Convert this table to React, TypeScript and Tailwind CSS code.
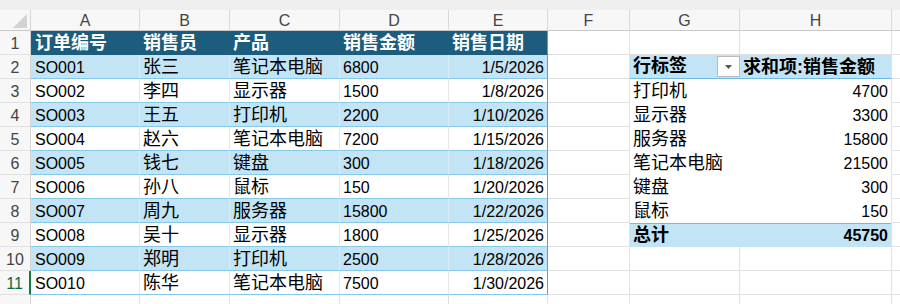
import React from "react";

const orders = [
  ["SO001", "张三", "笔记本电脑", "6800", "1/5/2026"],
  ["SO002", "李四", "显示器", "1500", "1/8/2026"],
  ["SO003", "王五", "打印机", "2200", "1/10/2026"],
  ["SO004", "赵六", "笔记本电脑", "7200", "1/15/2026"],
  ["SO005", "钱七", "键盘", "300", "1/18/2026"],
  ["SO006", "孙八", "鼠标", "150", "1/20/2026"],
  ["SO007", "周九", "服务器", "15800", "1/22/2026"],
  ["SO008", "吴十", "显示器", "1800", "1/25/2026"],
  ["SO009", "郑明", "打印机", "2500", "1/28/2026"],
  ["SO010", "陈华", "笔记本电脑", "7500", "1/30/2026"],
];

// pivot rows, keyed by sheet row number
const pivot: Record<number, [string, string]> = {
  3: ["打印机", "4700"],
  4: ["显示器", "3300"],
  5: ["服务器", "15800"],
  6: ["笔记本电脑", "21500"],
  7: ["键盘", "300"],
  8: ["鼠标", "150"],
};

const grid =
  "grid grid-cols-[31px_109px_90px_110px_109px_99px_82px_110px_152px_8px]";
const letters = ["A", "B", "C", "D", "E", "F", "G", "H", ""];

const isCjk = (s: string) => /[\u4e00-\u9fff]/.test(s);

function Cell({
  text = "",
  className = "",
  right = false,
}: {
  text?: string;
  className?: string;
  right?: boolean;
}) {
  return (
    <div
      className={`h-[24px] overflow-hidden whitespace-nowrap px-[3px] leading-[25px] ${
        right ? "text-right" : "text-left"
      } ${isCjk(text) ? "text-[18px]" : "text-[16px]"} ${className}`}
    >
      {text}
    </div>
  );
}

function RowNum({ n, active = false }: { n: number; active?: boolean }) {
  return (
    <div
      className={`h-[24px] border-b border-[#e1e1e1] bg-[#f7f7f7] text-center text-[16px] leading-[25px] ${
        active
          ? "border-r-2 border-r-[#107c41] bg-[#e8e8e8] text-[#0e6b39]"
          : "border-r border-r-[#d4d4d4] text-[#444]"
      }`}
    >
      {n < 12 ? n : ""}
    </div>
  );
}

const plain = "border-r border-b border-[#e1e1e1]";

function SheetRow({ n }: { n: number }) {
  const cells: React.ReactNode[] = [];

  // A..E : the order table
  if (n === 1) {
    const heads = ["订单编号", "销售员", "产品", "销售金额", "销售日期"];
    heads.forEach((h, i) =>
      cells.push(
        <Cell
          key={h}
          text={h}
          className={`bg-[#1c5d7e] font-bold text-white border-b border-[#1c5d7e] ${
            i === 4 ? "border-r border-r-[#4fa3d1]" : "border-r border-r-[#1c5d7e]"
          } ${i === 0 ? "pl-[4px]" : ""}`}
        />
      )
    );
  } else if (n <= 11) {
    const o = orders[n - 2];
    const band = n % 2 === 0 ? "bg-[#c2e4f5]" : "bg-white";
    o.forEach((v, i) =>
      cells.push(
        <Cell
          key={i}
          text={v}
          right={i === 4}
          className={`${band} border-b border-b-[#86c8ea] ${
            i === 4
              ? "border-r border-r-[#4fa3d1]"
              : n % 2 === 0
              ? "border-r border-r-[#d6eef9]"
              : "border-r border-r-[#e6e6e6]"
          } ${i === 0 ? "pl-[4px]" : ""}`}
        />
      )
    );
  } else {
    for (let i = 0; i < 5; i++) cells.push(<Cell key={i} className={plain} />);
  }

  // F
  cells.push(<Cell key="f" className={plain} />);

  // G, H : the pivot table
  if (n === 2) {
    cells.push(
      <div
        key="g"
        className="flex h-[24px] items-center justify-between border-b border-[#6fbbe3] bg-[#c2e4f5] pl-[3px] pr-0"
      >
        <span className="text-[18px] font-bold leading-[25px] text-black">行标签</span>
        <span className="flex h-[21px] w-[23px] items-center justify-center border border-[#b9b9b9] bg-white">
          <svg width="7" height="4" viewBox="0 0 7 4">
            <path d="M0 0h7L3.5 4z" fill="#555" />
          </svg>
        </span>
      </div>
    );
    cells.push(
      <Cell
        key="h"
        text="求和项:销售金额"
        className="bg-[#c2e4f5] font-bold border-b border-[#6fbbe3] border-r border-r-[#e1e1e1]"
      />
    );
  } else if (pivot[n]) {
    const [k, v] = pivot[n];
    cells.push(<Cell key="g" text={k} className="border-b border-white" />);
    cells.push(<Cell key="h" text={v} right className="border-b border-r border-white border-r-[#e1e1e1]" />);
  } else if (n === 9) {
    cells.push(
      <Cell key="g" text="总计" className="bg-[#c2e4f5] font-bold border-b border-[#c2e4f5]" />
    );
    cells.push(
      <Cell key="h" text="45750" right className="bg-[#c2e4f5] font-bold border-b border-[#c2e4f5] border-r border-r-[#e1e1e1]" />
    );
  } else {
    cells.push(<Cell key="g" className={plain} />);
    cells.push(<Cell key="h" className={plain} />);
  }

  cells.push(<Cell key="i" className="border-b border-[#e1e1e1]" />);

  return (
    <div className={`${grid} ${n === 9 ? "[&>*:nth-child(8)]:shadow-[inset_0_1px_0_#6fbbe3] [&>*:nth-child(9)]:shadow-[inset_0_1px_0_#6fbbe3]" : ""}`}>
      <RowNum n={n} active={n === 11} />
      {cells}
    </div>
  );
}

export default function App() {
  const rows = Array.from({ length: 12 }, (_, i) => i + 1);
  return (
    <div className="h-[304px] w-[900px] overflow-hidden bg-white font-['Liberation_Sans','Noto_Sans_CJK_SC',sans-serif] text-black">
      <div className="h-[10px] bg-[#efefef]" />
      <div className={`${grid} h-[21px] border-b border-[#c8c8c8] bg-[#f7f7f7]`}>
        <div className="relative border-r border-[#d4d4d4]">
          <svg className="absolute right-[3px] bottom-[3px]" width="14" height="14" viewBox="0 0 14 14">
            <path d="M14 0v14H0z" fill="#d2d2d2" />
          </svg>
        </div>
        {letters.map((l, i) => (
          <div
            key={i}
            className={`text-center text-[16px] leading-[21px] text-[#444] ${
              i < 8 ? "border-r border-[#d9d9d9]" : ""
            }`}
          >
            {l}
          </div>
        ))}
      </div>
      {rows.map((n) => (
        <SheetRow key={n} n={n} />
      ))}
    </div>
  );
}
